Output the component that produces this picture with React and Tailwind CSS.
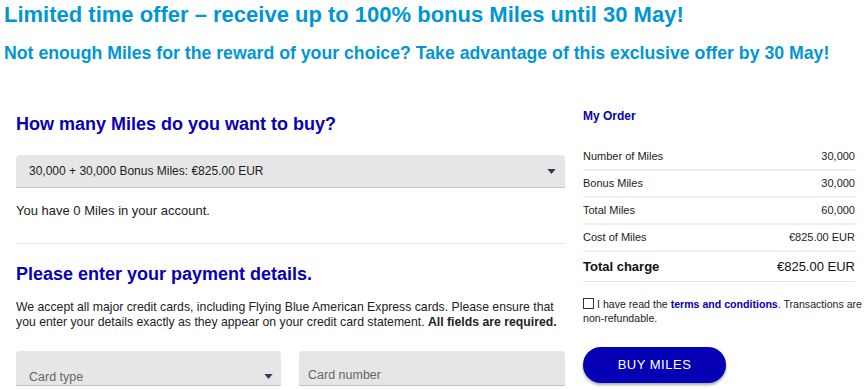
export default function App() {
  const rows = [
    ['Number of Miles', '30,000'],
    ['Bonus Miles', '30,000'],
    ['Total Miles', '60,000'],
    ['Cost of Miles', '€825.00 EUR'],
  ]

  return (
    <div className="w-[868px] h-[390px] overflow-hidden bg-white" style={{ fontFamily: '"Liberation Sans", Arial, sans-serif' }}>
      {/* Promo header */}
      <div className="px-1 pt-[2px]">
        <h1 className="text-[22px] leading-[26px] font-bold text-[#0096d6]">Limited time offer – receive up to 100% bonus Miles until 30 May!</h1>
        <h2 className="text-[17.7px] leading-[20px] font-bold text-[#0096d6] mt-[15px]">Not enough Miles for the reward of your choice? Take advantage of this exclusive offer by 30 May!</h2>
      </div>

      <div className="flex gap-[18px] pl-4 mt-[41px]">
        {/* Left column */}
        <div className="w-[549px] shrink-0">
          <h3 className="text-[18px] leading-[22px] font-bold text-[#0a00b4] mt-[9px]">How many Miles do you want to buy?</h3>

          <div className="mt-[20px] h-[33px] bg-[#e6e6e6] rounded-t-[4px] border-b border-[#b9c2d0] flex items-center justify-between pl-[13px] pr-[9px]">
            <span className="text-[12px] text-[#222]">30,000 + 30,000 Bonus Miles: €825.00 EUR</span>
            <svg width="9" height="5" viewBox="0 0 10 6"><path d="M0 0h10L5 6z" fill="#2d3e5c" /></svg>
          </div>

          <p className="text-[13px] leading-[16px] text-[#222] mt-[15px]">You have 0 Miles in your account.</p>

          <div className="border-t border-[#e8e8e8] mt-[24px]" />

          <h3 className="text-[18px] leading-[22px] font-bold text-[#0a00b4] mt-[19px]">Please enter your payment details.</h3>

          <p className="text-[12.25px] leading-[15px] text-[#222] mt-[15px]">
            We accept all major credit cards, including Flying Blue American Express cards. Please ensure that you enter your details exactly as they appear on your credit card statement. <b>All fields are required.</b>
          </p>

          <div className="flex gap-[18px] mt-[21px]">
            <div className="w-[265px] h-[35px] bg-[#e6e6e6] rounded-t-[4px] border-b border-[#b9c2d0] flex items-end justify-between pl-[13px] pr-[8px]">
              <span className="text-[12.5px] leading-[16px] text-[#666]">Card type</span>
              <svg className="mb-[6px]" width="9" height="5" viewBox="0 0 10 6"><path d="M0 0h10L5 6z" fill="#2d3e5c" /></svg>
            </div>
            <div className="flex-1 h-[35px] bg-[#e6e6e6] rounded-t-[4px] border-b border-[#b9c2d0] flex items-end pl-[9px] pb-[2px]">
              <span className="text-[12.5px] leading-[16px] text-[#666]">Card number</span>
            </div>
          </div>
        </div>

        {/* Right column: order summary */}
        <div className="w-[272px] shrink-0">
          <h4 className="text-[12px] leading-[14px] font-bold text-[#0a00b4] mt-[5px]">My Order</h4>
          <div className="mt-[21px]">
            {rows.map(([label, value]) => (
              <div key={label} className="flex justify-between items-center h-[27px] border-b-2 border-[#eeeeee] text-[11px] text-[#222]">
                <span>{label}</span>
                <span>{value}</span>
              </div>
            ))}
            <div className="flex justify-between items-center h-[30px] border-b border-[#e4e4e4] text-[13px] text-[#111]">
              <span className="font-bold">Total charge</span>
              <span>€825.00 EUR</span>
            </div>
          </div>

          <div className="mt-[15px] w-[285px] text-[10.6px] leading-[14px] text-[#222]">
            <span className="relative top-[1px] inline-block align-top w-[11px] h-[11px] border border-[#333] mr-[3px]" />
            I have read the <a className="font-bold text-[#0a00b4]">terms and conditions</a>. Transactions are non-refundable.
          </div>

          <button className="mt-[22px] w-[143px] h-[36px] rounded-full bg-[#0500b4] text-white text-[13px] tracking-[0.5px] shadow-[0_2px_3px_rgba(0,0,0,0.35)]">BUY MILES</button>
        </div>
      </div>
    </div>
  )
}
